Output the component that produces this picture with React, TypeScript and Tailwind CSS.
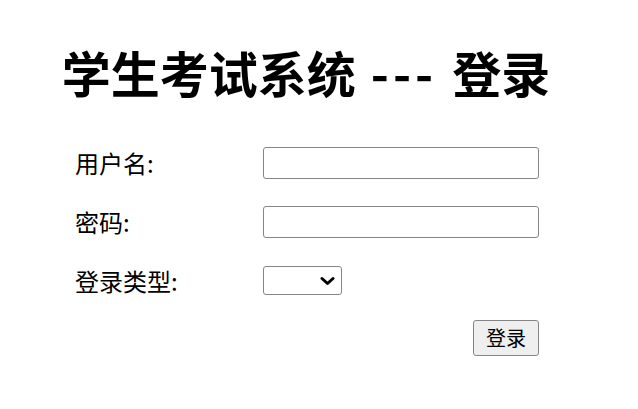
import React, { useState } from 'react';

const fontStack = { fontFamily: '"Noto Sans CJK SC", "Noto Sans", sans-serif' };

const App: React.FC = () => {
    const [username, setUsername] = useState('');
    const [password, setPassword] = useState('');
    const [loginType, setLoginType] = useState('');

    return (
        <div className="w-[638px] h-[409px] bg-white text-black" style={fontStack}>
            <div className="w-[612px]">
                {/* Title */}
                <h1 className="pt-[44px] h-[104px] text-center text-[49px] leading-[56px] font-bold">
                    学生考试系统<span className="tracking-[4px]"> --- </span>登录
                </h1>

                {/* Form */}
                <form
                    className="ml-[75px] w-[464px] mt-[29px]"
                    onSubmit={(e) => e.preventDefault()}
                >
                    <div className="flex items-center h-[59px]">
                        <label className="w-[188px] text-[24px] leading-none">用户名:</label>
                        <input
                            type="text"
                            value={username}
                            onChange={(e) => setUsername(e.target.value)}
                            className="w-[276px] h-[32px] border-[1.5px] border-[#858585] rounded-[3px] px-1 text-[20px] outline-none"
                        />
                    </div>
                    <div className="flex items-center h-[59px]">
                        <label className="w-[188px] text-[24px] leading-none">密码:</label>
                        <input
                            type="password"
                            value={password}
                            onChange={(e) => setPassword(e.target.value)}
                            className="w-[276px] h-[32px] border-[1.5px] border-[#858585] rounded-[3px] px-1 text-[20px] outline-none"
                        />
                    </div>
                    <div className="flex items-center h-[59px]">
                        <label className="w-[188px] text-[24px] leading-none">登录类型:</label>
                        <div className="relative w-[79px] h-[29px]">
                            <select
                                value={loginType}
                                onChange={(e) => setLoginType(e.target.value)}
                                className="w-full h-full appearance-none bg-white border-[1.5px] border-[#858585] rounded-[3px] outline-none"
                            >
                                <option value=""></option>
                            </select>
                            <svg
                                className="absolute right-[7px] top-[10px] pointer-events-none"
                                width="15"
                                height="10"
                                viewBox="0 0 15 10"
                            >
                                <path d="M2 2.5 L7.5 7.5 L13 2.5" fill="none" stroke="#000" strokeWidth="3" strokeLinecap="round" strokeLinejoin="round" />
                            </svg>
                        </div>
                    </div>
                    <div className="flex items-center justify-end h-[55px]">
                        <button
                            type="submit"
                            className="w-[66px] h-[36px] bg-[#efefef] border-[1.5px] border-[#858585] rounded-[3px] text-[20px] leading-none"
                        >
                            登录
                        </button>
                    </div>
                </form>
            </div>
        </div>
    );
};

export default App;
